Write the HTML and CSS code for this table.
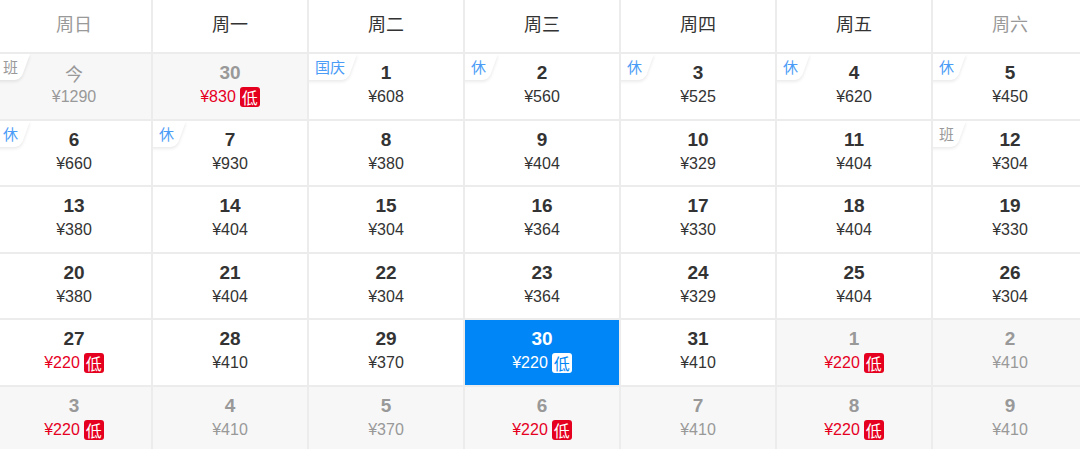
FILE: index.html
```html
<!DOCTYPE html>
<html lang="zh-CN">
<head>
    <meta charset="UTF-8">
    <meta name="viewport" content="width=device-width, initial-scale=1.0">
    <title>低价日历</title>
    <link rel="stylesheet" href="styles.css">
</head>
<body>
    <div class="calendar">
        <div class="week weekend">周日</div>
        <div class="week">周一</div>
        <div class="week">周二</div>
        <div class="week">周三</div>
        <div class="week">周四</div>
        <div class="week">周五</div>
        <div class="week weekend">周六</div>

        <!-- row 1 -->
        <div class="day off"><span class="tag work">班</span><div class="num today">今</div><div class="price">¥1290</div></div>
        <div class="day off low"><div class="num">30</div><div class="price">¥830<span class="badge">低</span></div></div>
        <div class="day"><span class="tag rest">国庆</span><div class="num">1</div><div class="price">¥608</div></div>
        <div class="day"><span class="tag rest">休</span><div class="num">2</div><div class="price">¥560</div></div>
        <div class="day"><span class="tag rest">休</span><div class="num">3</div><div class="price">¥525</div></div>
        <div class="day"><span class="tag rest">休</span><div class="num">4</div><div class="price">¥620</div></div>
        <div class="day"><span class="tag rest">休</span><div class="num">5</div><div class="price">¥450</div></div>

        <!-- row 2 -->
        <div class="day"><span class="tag rest">休</span><div class="num">6</div><div class="price">¥660</div></div>
        <div class="day"><span class="tag rest">休</span><div class="num">7</div><div class="price">¥930</div></div>
        <div class="day"><div class="num">8</div><div class="price">¥380</div></div>
        <div class="day"><div class="num">9</div><div class="price">¥404</div></div>
        <div class="day"><div class="num">10</div><div class="price">¥329</div></div>
        <div class="day"><div class="num">11</div><div class="price">¥404</div></div>
        <div class="day"><span class="tag work">班</span><div class="num">12</div><div class="price">¥304</div></div>

        <!-- row 3 -->
        <div class="day"><div class="num">13</div><div class="price">¥380</div></div>
        <div class="day"><div class="num">14</div><div class="price">¥404</div></div>
        <div class="day"><div class="num">15</div><div class="price">¥304</div></div>
        <div class="day"><div class="num">16</div><div class="price">¥364</div></div>
        <div class="day"><div class="num">17</div><div class="price">¥330</div></div>
        <div class="day"><div class="num">18</div><div class="price">¥404</div></div>
        <div class="day"><div class="num">19</div><div class="price">¥330</div></div>

        <!-- row 4 -->
        <div class="day"><div class="num">20</div><div class="price">¥380</div></div>
        <div class="day"><div class="num">21</div><div class="price">¥404</div></div>
        <div class="day"><div class="num">22</div><div class="price">¥304</div></div>
        <div class="day"><div class="num">23</div><div class="price">¥364</div></div>
        <div class="day"><div class="num">24</div><div class="price">¥329</div></div>
        <div class="day"><div class="num">25</div><div class="price">¥404</div></div>
        <div class="day"><div class="num">26</div><div class="price">¥304</div></div>

        <!-- row 5 -->
        <div class="day low"><div class="num">27</div><div class="price">¥220<span class="badge">低</span></div></div>
        <div class="day"><div class="num">28</div><div class="price">¥410</div></div>
        <div class="day"><div class="num">29</div><div class="price">¥370</div></div>
        <div class="day low selected"><div class="num">30</div><div class="price">¥220<span class="badge">低</span></div></div>
        <div class="day"><div class="num">31</div><div class="price">¥410</div></div>
        <div class="day off low"><div class="num">1</div><div class="price">¥220<span class="badge">低</span></div></div>
        <div class="day off"><div class="num">2</div><div class="price">¥410</div></div>

        <!-- row 6 -->
        <div class="day off low"><div class="num">3</div><div class="price">¥220<span class="badge">低</span></div></div>
        <div class="day off"><div class="num">4</div><div class="price">¥410</div></div>
        <div class="day off"><div class="num">5</div><div class="price">¥370</div></div>
        <div class="day off low"><div class="num">6</div><div class="price">¥220<span class="badge">低</span></div></div>
        <div class="day off"><div class="num">7</div><div class="price">¥410</div></div>
        <div class="day off low"><div class="num">8</div><div class="price">¥220<span class="badge">低</span></div></div>
        <div class="day off"><div class="num">9</div><div class="price">¥410</div></div>
    </div>
</body>
</html>
```

FILE: styles.css
```css
body {
    margin: 0;
    padding: 0;
    background: #fff;
    color: #333;
    font-family: "Liberation Sans", Arial, "Noto Sans CJK SC", sans-serif;
    overflow: hidden;
}

.calendar {
    display: grid;
    grid-template-columns: repeat(7, 154px);
    grid-template-rows: 52px repeat(6, 64.5px);
    gap: 2px;
    margin-left: -3px;
    width: max-content;
    background: #ececec;
}

.week {
    display: flex;
    align-items: center;
    justify-content: center;
    padding-bottom: 7px;
    background: #fff;
    font-family: "Noto Sans CJK SC", serif;
    font-size: 18px;
    color: #333;
}

.week.weekend {
    color: #999;
}

.day {
    position: relative;
    overflow: hidden;
    display: flex;
    flex-direction: column;
    align-items: center;
    background: #fff;
}

.day.off {
    background: #f7f7f7;
}

.num {
    margin-top: 8px;
    font-size: 19px;
    line-height: 22px;
    font-weight: bold;
    color: #333;
}

.num.today {
    font-family: "Noto Sans CJK SC", sans-serif;
    font-weight: normal;
    font-size: 18px;
}

.price {
    display: flex;
    align-items: center;
    margin-top: 2px;
    height: 22px;
    font-size: 16px;
    color: #333;
}

.day.off .num,
.day.off .price {
    color: #999;
}

.day.low .price {
    color: #e6001f;
}

.badge {
    display: inline-block;
    width: 20px;
    height: 20px;
    margin-left: 4px;
    border-radius: 3px;
    background: #e6001f;
    color: #fff;
    font-family: "Noto Sans CJK SC", sans-serif;
    font-size: 16px;
    line-height: 20px;
    text-align: center;
}

.day.selected {
    background: #0086f6;
}

.day.selected .num,
.day.selected .price {
    color: #fff;
}

.day.selected .badge {
    background: #fff;
    color: #0086f6;
}

/* holiday / workday corner label */
.tag {
    position: absolute;
    top: 0;
    left: 0;
    z-index: 1;
    padding: 3px 12px 3px 6px;
    font-family: "Noto Sans CJK SC", sans-serif;
    font-size: 15px;
    line-height: 20px;
}

.tag::before {
    content: "";
    position: absolute;
    top: 0;
    left: 0;
    right: 0;
    bottom: 0;
    z-index: -1;
    background: #fff;
    border-bottom-right-radius: 6px;
    box-shadow: 1px 2px 3px rgba(0, 0, 0, 0.08);
    transform: skewX(-20deg);
    transform-origin: top left;
}

.tag.rest {
    color: #4a9cf6;
}

.tag.work {
    color: #999;
}
```
